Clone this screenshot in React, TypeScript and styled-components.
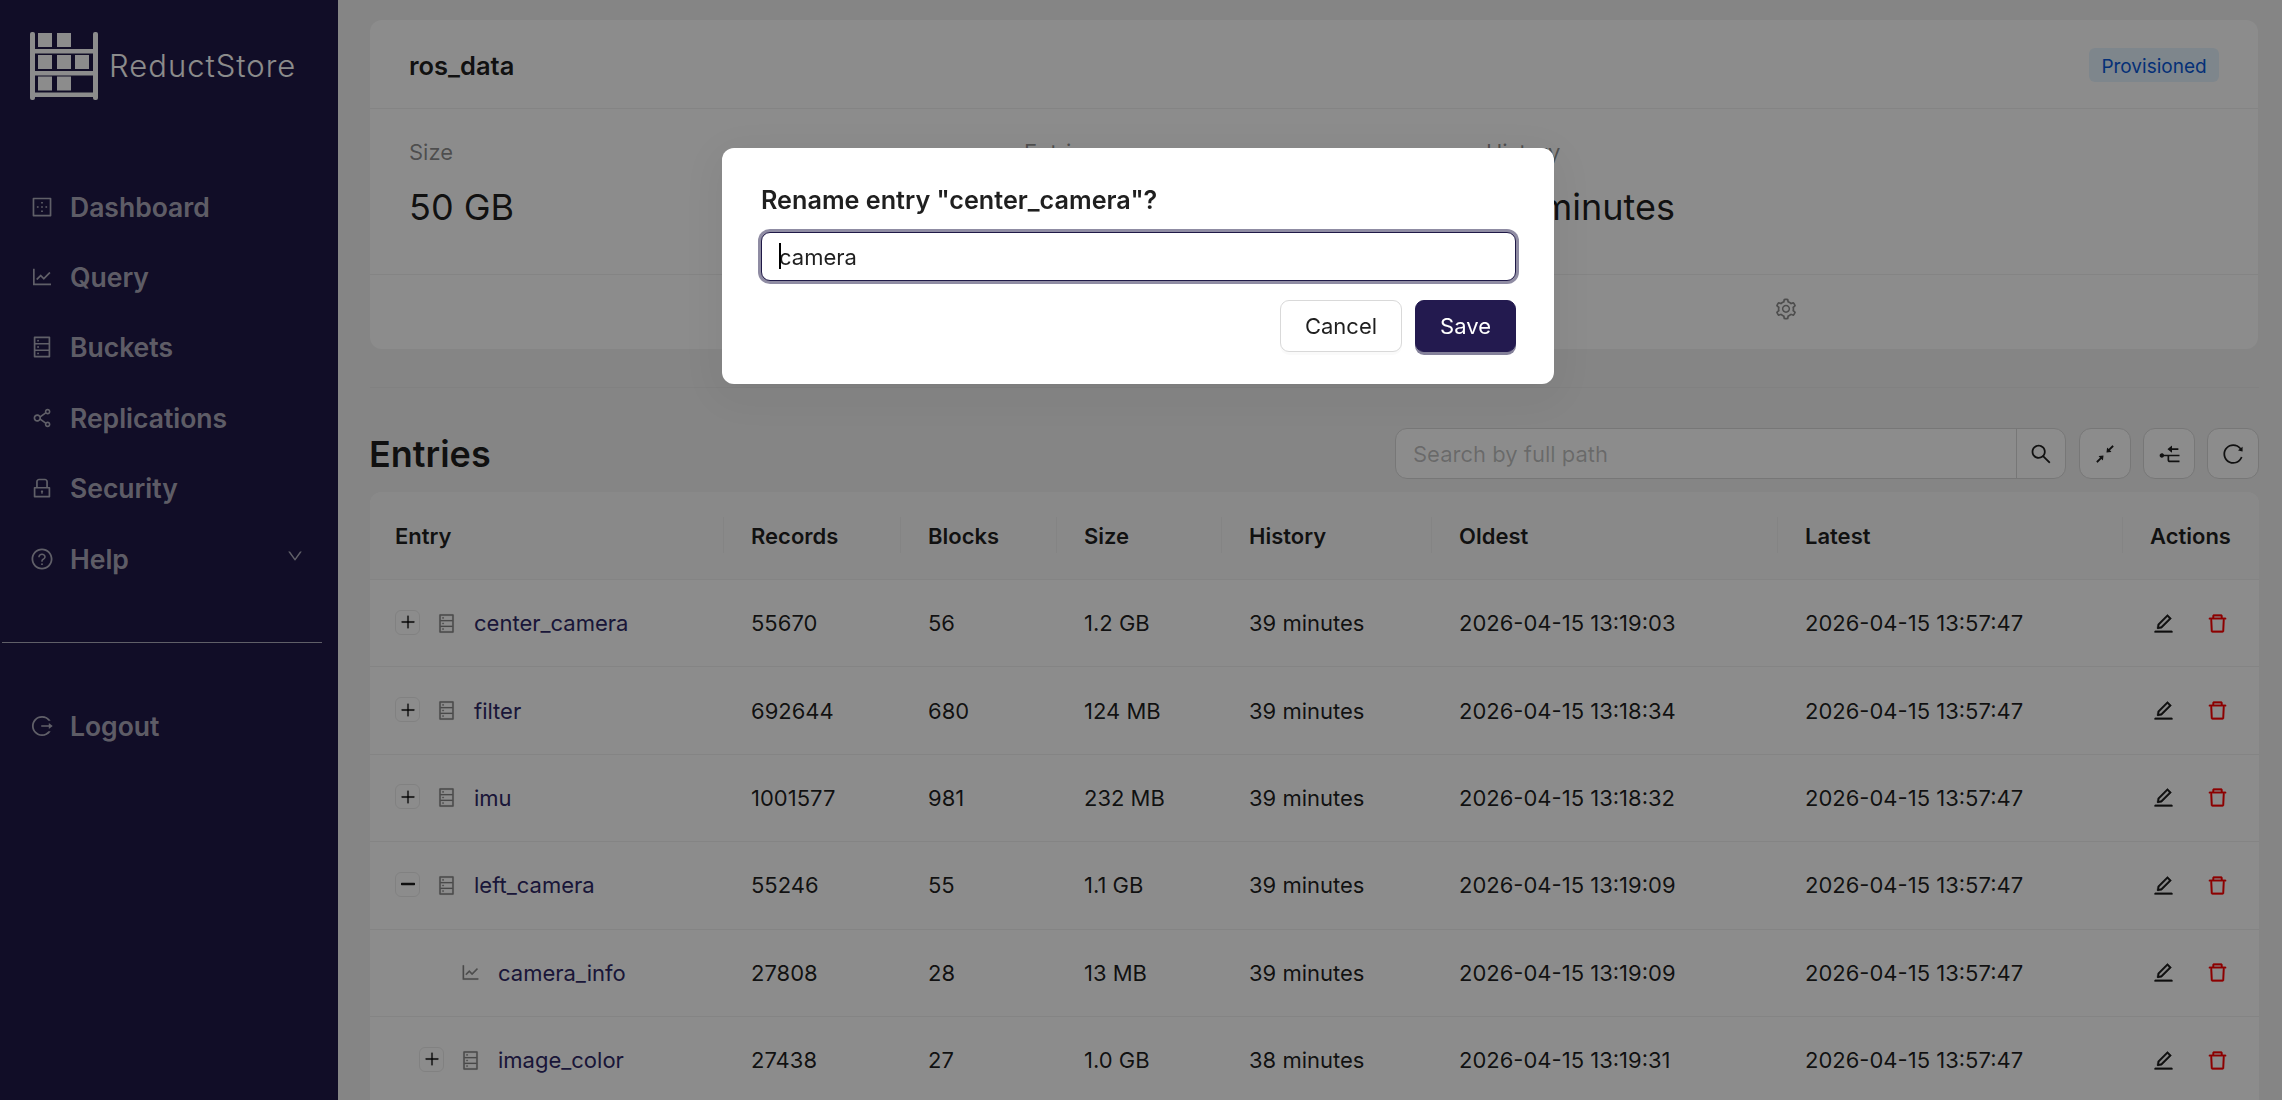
import React from "react";
import styled, { createGlobalStyle } from "styled-components";
import {
  AiOutlineBorderOuter,
  AiOutlineLineChart,
  AiOutlineDatabase,
  AiOutlineShareAlt,
  AiOutlineLock,
  AiOutlineQuestionCircle,
  AiOutlineDown,
  AiOutlineLogout,
  AiOutlineSetting,
  AiOutlineDelete,
  AiOutlineEdit,
  AiOutlineSearch,
  AiOutlineShrink,
  AiOutlineNodeCollapse,
  AiOutlineReload,
  AiOutlinePlus,
  AiOutlineMinus,
} from "react-icons/ai";

const GlobalStyle = createGlobalStyle`
  html, body { margin: 0; height: 100%; overflow: hidden; }
  body { font-family: Inter, "Liberation Sans", sans-serif; background: #f3f3f3; color: rgba(0,0,0,.88); }
  * { box-sizing: border-box; }
`;

const Shell = styled.div`
  display: flex;
  height: 1100px;
  overflow: hidden;
`;

const Sidebar = styled.aside`
  flex: 0 0 338px;
  background: #1f1947;
  display: flex;
  flex-direction: column;
`;

const Brand = styled.div`
  display: flex;
  gap: 11px;
  padding: 32px 0 0 30px;
  height: 171.5px;
  align-items: flex-start;
`;

const BrandName = styled.span`
  color: #fff;
  font-size: 31px;
  font-weight: 300;
  letter-spacing: 1px;
  line-height: 68px;
`;

const Nav = styled.nav`
  display: flex;
  flex-direction: column;
`;

const NavItem = styled.a`
  display: flex;
  align-items: center;
  height: 70.4px;
  padding-left: 30px;
  gap: 16px;
  color: rgba(255, 255, 255, 0.65);
  font-size: 26.5px;
  font-weight: 600;
  position: relative;
  svg.main { flex: 0 0 24px; width: 24px; height: 24px; }
`;

const Chevron = styled(AiOutlineDown)`
  margin-left: auto;
  margin-right: 34px;
  margin-bottom: 6px;
  width: 18px;
  height: 18px;
`;

const SideRule = styled.hr`
  margin: 48.5px 16px 47px 2px;
  border: 0;
  border-top: 1.5px solid rgba(255, 255, 255, 0.65);
`;

const Main = styled.main`
  flex: 1;
  min-width: 0;
  padding: 20px 24px 0 32px;
`;

const Card = styled.section`
  background: #fff;
  border-radius: 12px;
  width: 1888px;
  height: 329px;
  display: flex;
  flex-direction: column;
`;

const CardHead = styled.header`
  flex: 0 0 89px;
  display: flex;
  align-items: center;
  justify-content: space-between;
  padding: 2px 39px 0;
  border-bottom: 1.5px solid #f0f0f0;
`;

const CardTitle = styled.h2`
  margin: 0;
  font-size: 25.5px;
  font-weight: 600;
`;

const Badge = styled.span`
  display: inline-flex;
  align-items: center;
  justify-content: center;
  width: 130px;
  height: 34px;
  padding-top: 2px;
  border-radius: 6px;
  background: #e6f4ff;
  color: #0958d9;
  font-size: 19px;
`;

const Stats = styled.div`
  flex: 0 0 166px;
  display: grid;
  grid-template-columns: 615px 462px 1fr;
  padding: 28px 39px 0;
  border-bottom: 1.5px solid #f0f0f0;
`;

const Stat = styled.div`
  display: flex;
  flex-direction: column;
  gap: 16px;
`;

const StatLabel = styled.span`
  color: rgba(0, 0, 0, 0.45);
  font-size: 22px;
  line-height: 30px;
`;

const StatValue = styled.span`
  font-size: 36px;
  line-height: 48px;
`;

const CardActions = styled.footer`
  flex: 1;
  display: grid;
  grid-template-columns: 1fr 1fr;
  justify-items: center;
  align-items: center;
  color: rgba(0, 0, 0, 0.45);
  font-size: 24px;
  padding-bottom: 6px;
`;

const EntriesBar = styled.div`
  width: 1889px;
  margin-top: 38px;
  padding: 40px 0 13px;
  border-top: 1.5px solid #ebebeb;
  display: flex;
  align-items: center;
  height: 105px;
`;

const EntriesTitle = styled.h1`
  margin: 0 auto 0 -1px;
  font-size: 36px;
  font-weight: 600;
`;

const SearchGroup = styled.div`
  display: flex;
  width: 671px;
  height: 51px;
  background: #fff;
  border: 1.5px solid #d9d9d9;
  border-radius: 12px;
  margin-right: 13px;
`;

const SearchInput = styled.input`
  flex: 1;
  min-width: 0;
  border: 0;
  outline: 0;
  background: transparent;
  font: 22px Inter, sans-serif;
  padding: 0 17px;
  &::placeholder { color: rgba(0, 0, 0, 0.25); }
`;

const SearchButton = styled.button`
  flex: 0 0 49px;
  border: 0;
  border-left: 1.5px solid #d9d9d9;
  background: transparent;
  padding: 0;
  display: flex;
  align-items: center;
  justify-content: center;
  font-size: 24px;
  color: rgba(0, 0, 0, 0.88);
`;

const ToolButton = styled.button<{ $last?: boolean }>`
  flex: 0 0 52px;
  height: 51px;
  margin-right: ${(p) => (p.$last ? 0 : 12)}px;
  border: 1.5px solid #d9d9d9;
  border-radius: 12px;
  background: #fff;
  padding: 0;
  display: flex;
  align-items: center;
  justify-content: center;
  font-size: 24px;
  color: rgba(0, 0, 0, 0.88);
`;

const TableWrap = styled.div`
  width: 1889px;
  background: #fff;
  border-radius: 12px 12px 0 0;
  overflow: hidden;
`;

const Table = styled.table`
  width: 100%;
  table-layout: fixed;
  border-collapse: separate;
  border-spacing: 0;
  font-size: 22px;
`;

const Th = styled.th`
  position: relative;
  height: 88px;
  background: #fafafa;
  border-bottom: 1.5px solid #f0f0f0;
  padding: 0 0 0 27px;
  text-align: left;
  font-weight: 600;
  &:first-child { padding-left: 25px; }
  &:not(:last-child)::before {
    content: "";
    position: absolute;
    right: 0;
    top: 25px;
    height: 36px;
    width: 1.5px;
    background: #f0f0f0;
  }
`;

const Td = styled.td`
  height: 87.4px;
  padding: 0 0 0 27px;
  border-bottom: 1.5px solid #f0f0f0;
  white-space: nowrap;
`;

const EntryCell = styled.div<{ $depth: number }>`
  display: flex;
  align-items: center;
  margin-left: -2px;
  padding-left: ${(p) => p.$depth * 24}px;
  color: #2f2866;
`;

const Expander = styled.button<{ $strong?: boolean }>`
  flex: 0 0 25px;
  width: 25px;
  height: 25px;
  border: 1.5px solid #ececec;
  border-radius: 6px;
  background: #fff;
  padding: 0;
  display: flex;
  align-items: center;
  justify-content: center;
  color: rgba(0, 0, 0, 0.88);
  font-size: 18px;
  margin-right: 16px;
  margin-top: -2px;
  svg { stroke: currentColor; stroke-width: ${(p) => (p.$strong ? 60 : 10)}; }
`;

const ExpanderGap = styled.span`
  flex: 0 0 41px;
`;

const EntryIcon = styled.span`
  display: flex;
  width: 21px;
  justify-content: center;
  font-size: 25px;
  color: rgba(0, 0, 0, 0.45);
  margin-right: 17px;
  svg { stroke: currentColor; stroke-width: 8; }
`;

const RowActions = styled.div`
  display: flex;
  align-items: center;
  gap: 31px;
  font-size: 23px;
  padding-left: 2px;
  svg { stroke: currentColor; stroke-width: 15; }
`;

const EditIcon = styled(AiOutlineEdit)`
  color: rgba(0, 0, 0, 0.88);
`;

const DeleteIcon = styled(AiOutlineDelete)`
  color: #ff0000;
`;

const Overlay = styled.div`
  position: fixed;
  inset: 0;
  background: rgba(0, 0, 0, 0.45);
  display: flex;
  justify-content: center;
  align-items: flex-start;
  padding: 148px 6px 0 0;
`;

const Modal = styled.div`
  width: 832px;
  height: 236px;
  background: #fff;
  border-radius: 12px;
  padding: 36px 38px 0 39px;
  box-shadow: 0 9px 42px 12px rgba(0, 0, 0, 0.05), 0 4px 9px -6px rgba(0, 0, 0, 0.12);
`;

const ModalTitle = styled.h3`
  margin: 0 0 16px;
  font-size: 25.2px;
  line-height: 32px;
  font-weight: 600;
`;

const InputBox = styled.div`
  position: relative;
`;

const ModalInput = styled.input`
  display: block;
  width: 100%;
  height: 49px;
  border: 1.5px solid #1f1947;
  border-radius: 9px;
  outline: 0;
  padding: 0 17px;
  font: 22px Inter, sans-serif;
  color: rgba(0, 0, 0, 0.88);
  caret-color: transparent;
  box-shadow: 0 0 0 3px rgba(31, 25, 71, 0.5);
`;

const Caret = styled.i`
  position: absolute;
  left: 18px;
  top: 11px;
  width: 1.5px;
  height: 26px;
  background: #000;
`;

const ModalFooter = styled.div`
  display: flex;
  justify-content: flex-end;
  gap: 13px;
  margin-top: 19px;
`;

const DialogButton = styled.button<{ $primary?: boolean }>`
  height: 52px;
  padding: 0 24px;
  border-radius: 9px;
  border: 1.5px solid ${(p) => (p.$primary ? "#231a4f" : "#d9d9d9")};
  background: ${(p) => (p.$primary ? "#231a4f" : "#fff")};
  color: ${(p) => (p.$primary ? "#fff" : "rgba(0,0,0,.88)")};
  font: 22px Inter, sans-serif;
  box-shadow: 0 3px 0 ${(p) => (p.$primary ? "rgba(31,25,71,.55)" : "rgba(0,0,0,.02)")};
`;

const Logo = () => (
  <svg width="68" height="68" viewBox="0 0 68 68" fill="#fff">
    <rect x="0" y="0" width="5" height="68" rx="2" />
    <rect x="63" y="0" width="5" height="68" rx="2" />
    <rect x="3" y="17" width="62" height="4.5" />
    <rect x="3" y="39" width="62" height="4.5" />
    <rect x="3" y="60.5" width="62" height="4.5" />
    <rect x="8" y="1" width="14" height="14" />
    <rect x="27" y="1" width="14" height="14" />
    <rect x="8" y="23" width="14" height="14" />
    <rect x="27" y="23" width="14" height="14" />
    <rect x="45" y="23" width="14" height="14" />
    <rect x="8" y="44.5" width="14" height="14" />
    <rect x="27" y="44.5" width="14" height="14" />
  </svg>
);

const columns = [354, 177, 156, 165, 210, 346, 345, 136];
const headers = ["Entry", "Records", "Blocks", "Size", "History", "Oldest", "Latest", "Actions"];

type Row = {
  name: string;
  depth: number;
  kind: "plus" | "minus" | "leaf";
  cells: string[];
};

const rows: Row[] = [
  { name: "center_camera", depth: 0, kind: "plus", cells: ["55670", "56", "1.2 GB", "39 minutes", "2026-04-15 13:19:03", "2026-04-15 13:57:47"] },
  { name: "filter", depth: 0, kind: "plus", cells: ["692644", "680", "124 MB", "39 minutes", "2026-04-15 13:18:34", "2026-04-15 13:57:47"] },
  { name: "imu", depth: 0, kind: "plus", cells: ["1001577", "981", "232 MB", "39 minutes", "2026-04-15 13:18:32", "2026-04-15 13:57:47"] },
  { name: "left_camera", depth: 0, kind: "minus", cells: ["55246", "55", "1.1 GB", "39 minutes", "2026-04-15 13:19:09", "2026-04-15 13:57:47"] },
  { name: "camera_info", depth: 1, kind: "leaf", cells: ["27808", "28", "13 MB", "39 minutes", "2026-04-15 13:19:09", "2026-04-15 13:57:47"] },
  { name: "image_color", depth: 1, kind: "plus", cells: ["27438", "27", "1.0 GB", "38 minutes", "2026-04-15 13:19:31", "2026-04-15 13:57:47"] },
];

const navItems = [
  { label: "Dashboard", Icon: AiOutlineBorderOuter },
  { label: "Query", Icon: AiOutlineLineChart },
  { label: "Buckets", Icon: AiOutlineDatabase },
  { label: "Replications", Icon: AiOutlineShareAlt },
  { label: "Security", Icon: AiOutlineLock },
];

export default function App() {
  return (
    <>
      <GlobalStyle />
      <Shell>
        <Sidebar>
          <Brand>
            <Logo />
            <BrandName>ReductStore</BrandName>
          </Brand>
          <Nav>
            {navItems.map(({ label, Icon }) => (
              <NavItem key={label}>
                <Icon className="main" />
                {label}
              </NavItem>
            ))}
            <NavItem>
              <AiOutlineQuestionCircle className="main" />
              Help
              <Chevron />
            </NavItem>
          </Nav>
          <SideRule />
          <Nav>
            <NavItem>
              <AiOutlineLogout className="main" />
              Logout
            </NavItem>
          </Nav>
        </Sidebar>
        <Main>
          <Card>
            <CardHead>
              <CardTitle>ros_data</CardTitle>
              <Badge>Provisioned</Badge>
            </CardHead>
            <Stats>
              <Stat>
                <StatLabel>Size</StatLabel>
                <StatValue>50 GB</StatValue>
              </Stat>
              <Stat>
                <StatLabel>Entries</StatLabel>
                <StatValue>8</StatValue>
              </Stat>
              <Stat>
                <StatLabel>History</StatLabel>
                <StatValue>39 minutes</StatValue>
              </Stat>
            </Stats>
            <CardActions>
              <AiOutlineDelete />
              <AiOutlineSetting />
            </CardActions>
          </Card>
          <EntriesBar>
            <EntriesTitle>Entries</EntriesTitle>
            <SearchGroup>
              <SearchInput placeholder="Search by full path" />
              <SearchButton>
                <AiOutlineSearch />
              </SearchButton>
            </SearchGroup>
            <ToolButton>
              <AiOutlineShrink />
            </ToolButton>
            <ToolButton>
              <AiOutlineNodeCollapse />
            </ToolButton>
            <ToolButton $last>
              <AiOutlineReload />
            </ToolButton>
          </EntriesBar>
          <TableWrap>
            <Table>
              <colgroup>
                {columns.map((w, i) => (
                  <col key={i} style={{ width: w }} />
                ))}
              </colgroup>
              <thead>
                <tr>
                  {headers.map((h) => (
                    <Th key={h}>{h}</Th>
                  ))}
                </tr>
              </thead>
              <tbody>
                {rows.map((r) => (
                  <tr key={r.name}>
                    <Td>
                      <EntryCell $depth={r.depth}>
                        {r.kind === "leaf" ? (
                          <ExpanderGap />
                        ) : (
                          <Expander $strong={r.kind === "minus"}>
                            {r.kind === "plus" ? <AiOutlinePlus /> : <AiOutlineMinus />}
                          </Expander>
                        )}
                        <EntryIcon>
                          {r.kind === "leaf" ? <AiOutlineLineChart /> : <AiOutlineDatabase />}
                        </EntryIcon>
                        {r.name}
                      </EntryCell>
                    </Td>
                    {r.cells.map((c, i) => (
                      <Td key={i}>{c}</Td>
                    ))}
                    <Td>
                      <RowActions>
                        <EditIcon />
                        <DeleteIcon />
                      </RowActions>
                    </Td>
                  </tr>
                ))}
              </tbody>
            </Table>
          </TableWrap>
        </Main>
      </Shell>
      <Overlay>
        <Modal>
          <ModalTitle>Rename entry "center_camera"?</ModalTitle>
          <InputBox>
            <ModalInput value="camera" readOnly />
            <Caret />
          </InputBox>
          <ModalFooter>
            <DialogButton>Cancel</DialogButton>
            <DialogButton $primary>Save</DialogButton>
          </ModalFooter>
        </Modal>
      </Overlay>
    </>
  );
}
